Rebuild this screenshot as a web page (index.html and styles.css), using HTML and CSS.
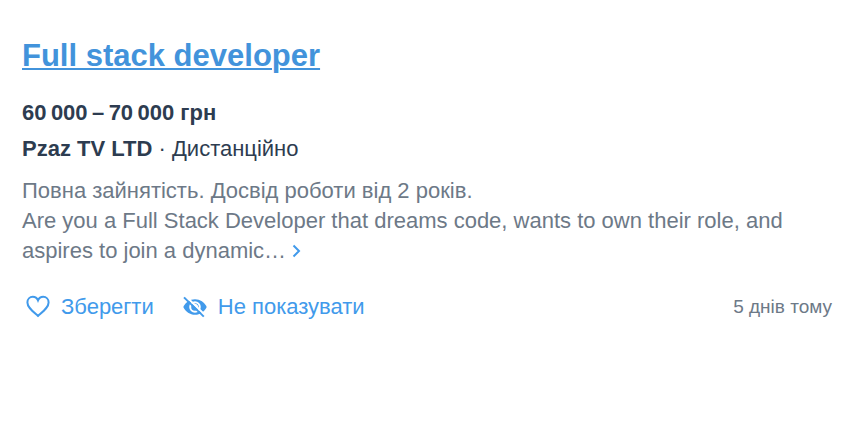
FILE: index.html
```html
<!DOCTYPE html>
<html lang="uk">

<head>
    <meta charset="UTF-8">
    <meta name="viewport" content="width=device-width, initial-scale=1.0">
    <title>Full stack developer</title>
    <link rel="stylesheet" href="styles.css">
</head>

<body>
    <article class="job">
        <h2 class="job-title"><a href="#">Full stack developer</a></h2>
        <div class="salary">60&#8201;000&#8201;–&#8201;70&#8201;000 грн</div>
        <div class="company"><b>Pzaz TV LTD</b> · Дистанційно</div>
        <p class="description">
            Повна зайнятість. Досвід роботи від 2 років.<br>
            Are you a Full Stack Developer that dreams code, wants to own their role, and aspires to join a dynamic…
            <a href="#" class="more" aria-label="Детальніше"><svg width="10" height="14" viewBox="0 0 10 14"><path d="M1.5 1.5l5.5 5.5-5.5 5.5" /></svg></a>
        </p>
        <div class="job-footer">
            <button type="button" class="action">
                <svg class="icon" viewBox="0 0 26 26"><path class="line" d="M13 22C7.5 17 2.4 13.2 2.4 8.4c0-3.2 2.4-5.6 5.4-5.6 2.4 0 4.2 1.3 5.2 3.6 1-2.3 2.8-3.6 5.2-3.6 3 0 5.4 2.4 5.4 5.6 0 4.8-5.1 8.6-10.6 13.6z" /></svg>
                Зберегти
            </button>
            <button type="button" class="action">
                <svg class="icon" viewBox="0 0 26 26">
                    <path d="M1.3 13C3.5 8.2 8 5.2 13 5.2S22.5 8.2 24.7 13C22.5 17.8 18 20.8 13 20.8S3.5 17.8 1.3 13z" />
                    <circle class="ring" cx="13" cy="13" r="4.8" />
                    <path class="ring" d="M12.5 10.8a2.4 2.4 0 0 1 2.7 2.7" />
                    <path class="gap" d="M3.5 2L24 22" />
                    <path class="line" d="M2 3.4l19.8 19.2" />
                </svg>
                Не показувати
            </button>
            <time class="date">5 днів тому</time>
        </div>
    </article>
</body>

</html>
```
FILE: styles.css
```css
body {
    margin: 0;
    background-color: #fff;
    color: #2d3c50;
    font-family: "Liberation Sans", Arial, sans-serif;
    font-size: 22px;
    line-height: 30px;
}

.job {
    padding: 36px 28px 36px 22px;
}

.job-title {
    margin: 0 0 22px;
    font-size: 31px;
    line-height: 40px;
}

a {
    color: #4293db;
    text-decoration-thickness: 2px;
    text-underline-offset: 2px;
}

.salary {
    margin-bottom: 6px;
    font-weight: bold;
}

.description {
    margin: 12px 0 26px;
    color: #6d7987;
}

.more svg {
    fill: none;
    stroke: #419aeb;
    stroke-width: 2;
}

.job-footer {
    display: flex;
    align-items: center;
    gap: 28px;
    padding-left: 3px;
}

.action {
    display: flex;
    align-items: center;
    gap: 10px;
    padding: 0;
    border: 0;
    background: none;
    color: #419aeb;
    font: inherit;
    cursor: pointer;
}

.icon {
    width: 26px;
    height: 26px;
    fill: currentColor;
}

.icon .line {
    fill: none;
    stroke: currentColor;
    stroke-width: 2;
}

.icon .ring,
.icon .gap {
    fill: none;
    stroke: #fff;
    stroke-width: 2;
}

.date {
    margin-left: auto;
    color: #6d7987;
    font-size: 19px;
}
```
